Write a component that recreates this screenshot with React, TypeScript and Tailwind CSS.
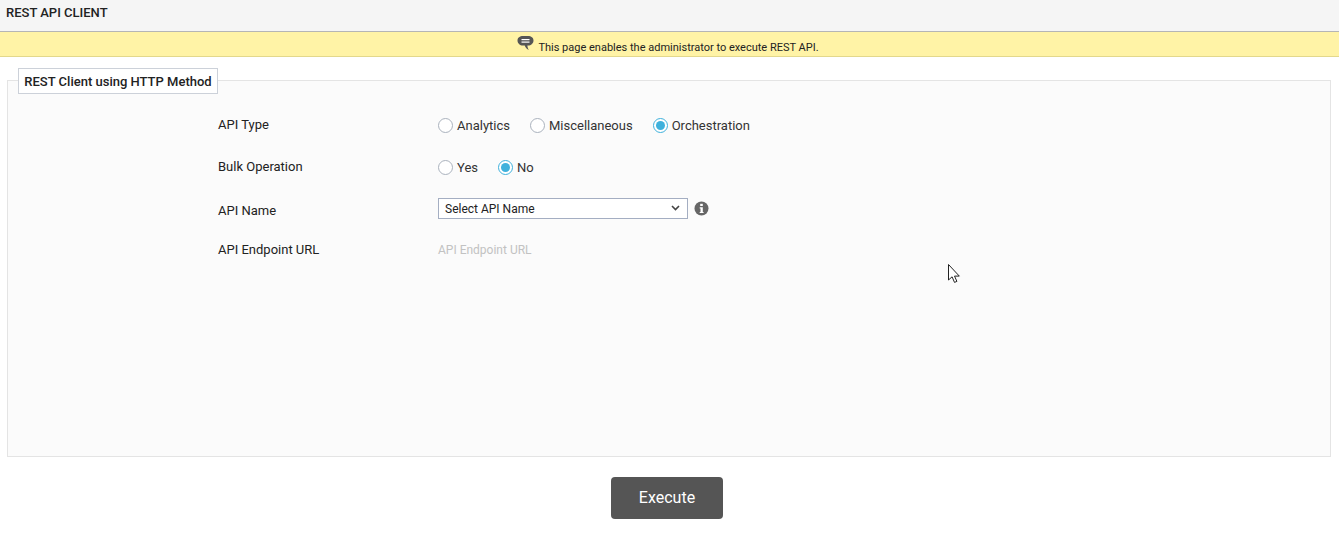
import React from 'react';

const Radio = ({ label, checked }: { label: string; checked?: boolean }) => (
  <div className="flex items-center gap-[4px]">
    <span className={`w-[15px] h-[15px] rounded-full border bg-white flex items-center justify-center ${checked ? 'border-[#3fb1dc]' : 'border-[#aab2bd]'}`}>
      {checked && <span className="w-[9px] h-[9px] rounded-full bg-[#3fb1dc]"></span>}
    </span>
    <span className="text-[13px] text-[#333]">{label}</span>
  </div>
);

const FormRow = ({ label, className, children }: { label: string; className: string; children: React.ReactNode }) => (
  <div className={`flex items-center ${className}`}>
    <label className="w-[220px] text-[13px] text-[#222]">{label}</label>
    {children}
  </div>
);

export default function App() {
  return (
    <div className="relative h-[535px] bg-white overflow-hidden font-['Roboto',sans-serif]">
      <div className="h-[32px] bg-[#f5f5f5] border-b border-[#b5b5b5] px-[6px] pt-[5px] text-[13px] leading-[16px] font-medium text-[#222]">
        REST API CLIENT
      </div>
      <div className="h-[25px] bg-[#fff3a6] border-b border-[#e3d88c] flex justify-center text-[11px] text-[#222]">
        <div className="flex items-start gap-[5px] ml-[-4px]">
          <svg width="17" height="16" viewBox="0 0 17 16" className="mt-[3px] ml-[1px] mr-[-1px]">
            <path d="M6 1h5c3.200 0 5.500 1.600 5.500 4.500S14.200 10.500 11 10.500h-.6c.1 1.700.5 3.100 1.500 4.500-2-.6-3.400-2.300-4.200-4.500H6C2.800 10.500.5 8.400.5 5.500S2.800 1 6 1z" fill="#555" />
            <rect x="4.500" y="4" width="8" height="1.200" fill="#fff" />
            <rect x="4.500" y="6.500" width="8" height="1.200" fill="#fff" />
          </svg>
          <span className="mt-[9px] leading-[14px]">This page enables the administrator to execute REST API.</span>
        </div>
      </div>

      <fieldset className="ml-[7px] mr-[8px] mt-[11px] h-[389px] border border-[#e4e4e4] bg-[#fbfbfb] pl-[10px]">
        <legend className="h-[24px] w-[200px]">
          <div className="h-[26px] pt-[1px] bg-white border border-[#ccd1d9] flex items-center justify-center text-[13px] font-medium text-[#222]">
            REST Client using HTTP Method
          </div>
        </legend>
        <div className="pl-[200px]">
          <FormRow label="API Type" className="mt-[21px] h-[24px]">
            <div className="flex gap-[20px] mt-[1px]">
              <Radio label="Analytics" />
              <Radio label="Miscellaneous" />
              <Radio label="Orchestration" checked />
            </div>
          </FormRow>
          <FormRow label="Bulk Operation" className="mt-[18px] h-[24px]">
            <div className="flex gap-[20px] mt-[1px]">
              <Radio label="Yes" />
              <Radio label="No" checked />
            </div>
          </FormRow>
          <FormRow label="API Name" className="mt-[20px] h-[24px]">
            <div className="flex items-center gap-[6px] mt-[-6px]">
              <div className="w-[250px] h-[21px] bg-white border border-[#a4aec2] flex items-center justify-between pl-[6px] pr-[7px] text-[12px] text-[#222]">
                <span className="pt-[2px]">Select API Name</span>
                <svg width="9" height="6" viewBox="0 0 9 6">
                  <path d="M1 1l3.500 3.500L8 1" fill="none" stroke="#444" strokeWidth="1.6" />
                </svg>
              </div>
              <svg width="15" height="15" viewBox="0 0 15 15">
                <circle cx="7.500" cy="7.500" r="7" fill="#666" />
                <rect x="6.200" y="2.800" width="2.600" height="2.200" fill="#fff" />
                <path d="M5.700 6.200h3.100v4.700h.8v1.200H5.700v-1.200h.8V7.400h-.8z" fill="#fff" />
              </svg>
            </div>
          </FormRow>
          <FormRow label="API Endpoint URL" className="mt-[15px] h-[24px]">
            <span className="text-[12px] text-[#c2c2c2]">API Endpoint URL</span>
          </FormRow>
        </div>
      </fieldset>

      <div className="flex justify-center mt-[20px] pr-[5px]">
        <button className="w-[112px] h-[42px] rounded-[4px] bg-[#555] text-white text-[16px]">Execute</button>
      </div>

      <svg width="14" height="21" viewBox="0 0 14 21" className="absolute left-[948px] top-[264px]">
        <path d="M.5.500v15.500l3.600-3.200 2.400 5.600 2.400-1-2.400-5.300h4.800z" fill="#fff" stroke="#222" strokeWidth="1" />
      </svg>
    </div>
  );
}
